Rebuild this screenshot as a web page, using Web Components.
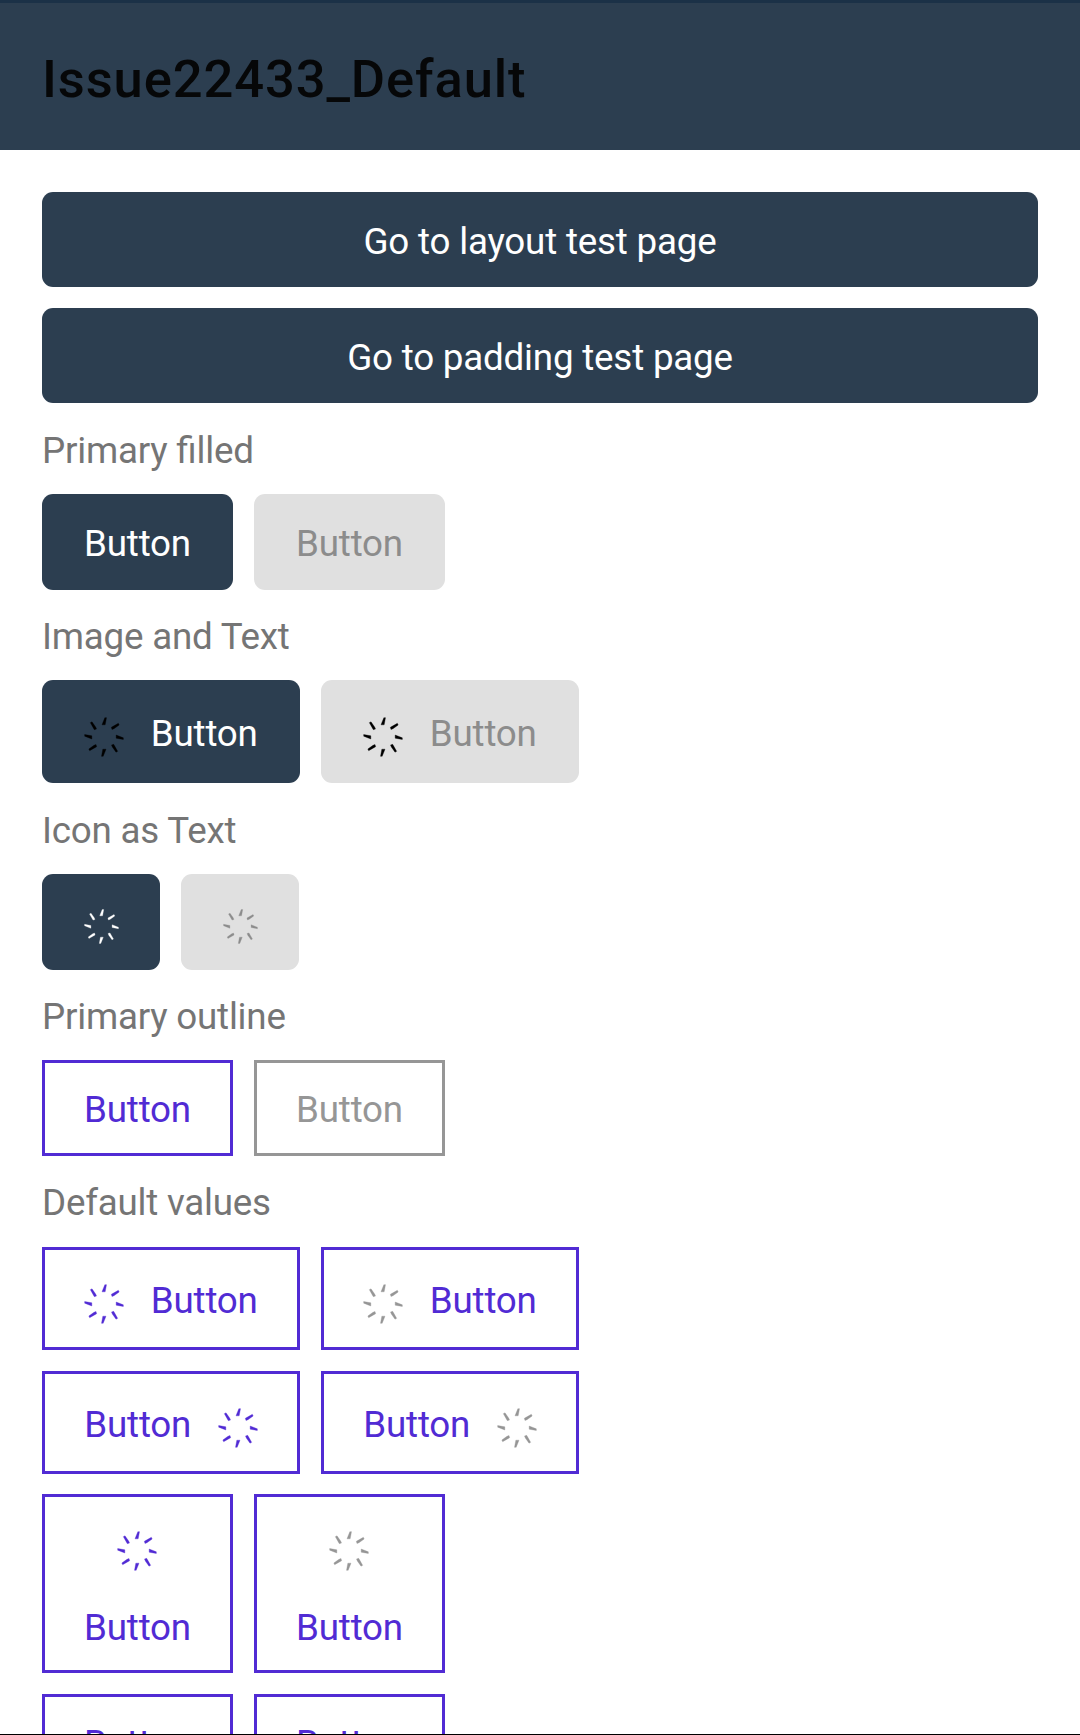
<!DOCTYPE html>
<html lang="en">
<head>
<meta charset="utf-8">
<title>Issue22433_Default</title>
<style>
html, body { margin: 0; padding: 0; background: #fff; }
body { height: 1735px; overflow: hidden; font-family: Roboto, "Liberation Sans", sans-serif; font-feature-settings: "liga" 1; }
</style>
</head>
<body>
<gallery-page></gallery-page>
<script>
class AppBar extends HTMLElement {
  constructor() {
    super();
    this.attachShadow({ mode: "open" }).innerHTML = `
      <style>
        :host { display: block; box-sizing: border-box; height: 150px; flex: none;
          background: #2c3e50; border-top: 3px solid #1b3147; padding: 45px 42px 0; }
        h1 { margin: 0; font-size: 52.5px; line-height: 62px; font-weight: 500; letter-spacing: .9px; color: #060708; white-space: nowrap; }
      </style>
      <h1><slot></slot></h1>`;
  }
}

class SpinnerIcon extends HTMLElement {
  constructor() {
    super();
    const rays = [0, 90, 180, 270].map(a => `<g transform="rotate(${a})">
      <path d="M2.5 -58H7.5L3.5 -36.5H-6Z"/>
      <path d="M43 -41L45.5 -36L30 -25L24 -22.5L22 -29Z"/></g>`).join("");
    this.attachShadow({ mode: "open" }).innerHTML = `
      <style>
        :host { display: block; flex: none; width: var(--icon-size, 40px); height: var(--icon-size, 40px); }
        svg { display: block; width: 100%; height: 100%; fill: currentColor; stroke: currentColor; stroke-width: 1; }
      </style>
      <svg viewBox="-60 -60 120 120">${rays}</svg>`;
  }
}

class UiButton extends HTMLElement {
  constructor() {
    super();
    this.attachShadow({ mode: "open" }).innerHTML = `
      <style>
        :host { display: flex; box-sizing: border-box; flex: none; width: 191px; height: 96px;
          justify-content: center; align-items: flex-start; padding-top: 28px;
          border-radius: 11px; background: #2c3e50; color: #fff;
          font-size: 36.75px; line-height: 43px; letter-spacing: -.2px; white-space: nowrap; }
        :host([wide]) { width: 100%; height: 95px; }
        :host([off]) { background: #e0e0e0; color: #8c8c8c; }
        :host([image]) { width: 258px; height: 103px; padding-top: 32px; gap: 26.5px; }
        :host([image]) ::slotted(spinner-icon) { margin-top: 4.8px; color: #000; }
        :host([glyph]) { width: 118px; padding-top: 34.5px; --icon-size: 35px; }
        :host([outline]) { padding-top: 25px; border: 3px solid #512bd4; border-radius: 0; background: #fff; color: #512bd4; }
        :host([outline][off]) { border-color: #969696; color: #969696; }
        :host([outline][image]) { padding-top: 29px; }
        :host([outline]) ::slotted(spinner-icon) { color: #512bd4; }
        :host([outline]) ::slotted(spinner-icon[dim]) { color: #969696; }
        :host([stack]) { flex-direction: column; align-items: center; justify-content: flex-start;
          height: 179px; padding-top: 33.6px; gap: 35.4px; }
        :host([stack]) ::slotted(spinner-icon) { margin-right: 1.4px; }
      </style>
      <slot></slot>`;
  }
}

class SectionLabel extends HTMLElement {
  constructor() {
    super();
    this.attachShadow({ mode: "open" }).innerHTML = `
      <style>
        :host { display: block; font-size: 36.75px; line-height: 43px; letter-spacing: -.22px; color: #757575; padding: 25px 0 22px; }
        :host([roomy]) { padding-top: 26px; }
        :host([last]) { padding-bottom: 23px; }
      </style>
      <slot></slot>`;
  }
}

class ButtonRow extends HTMLElement {
  constructor() {
    super();
    this.attachShadow({ mode: "open" }).innerHTML = `
      <style>
        :host { display: flex; gap: 21px; }
        :host([column]) { flex-direction: column; }
      </style>
      <slot></slot>`;
  }
}

class GalleryPage extends HTMLElement {
  constructor() {
    super();
    this.attachShadow({ mode: "open" }).innerHTML = `
      <style>
        :host { display: flex; flex-direction: column; box-sizing: border-box; height: 1735px;
          overflow: hidden; border-bottom: 1px solid #000; }
        main { flex: 1; min-height: 0; overflow: hidden; padding: 42px 42px 0; }
        .defaults { display: flex; flex-direction: column; gap: 21px; }
        .tight { margin-top: -1px; }
      </style>
      <app-bar>Issue22433_Default</app-bar>
      <main>
        <button-row column>
          <ui-button wide>Go to layout test page</ui-button>
          <ui-button wide>Go to padding test page</ui-button>
        </button-row>
        <section-label roomy>Primary filled</section-label>
        <button-row><ui-button>Button</ui-button><ui-button off>Button</ui-button></button-row>
        <section-label>Image and Text</section-label>
        <button-row>
          <ui-button image><spinner-icon></spinner-icon><span>Button</span></ui-button>
          <ui-button image off><spinner-icon></spinner-icon><span>Button</span></ui-button>
        </button-row>
        <section-label roomy>Icon as Text</section-label>
        <button-row>
          <ui-button glyph><spinner-icon></spinner-icon></ui-button>
          <ui-button glyph off><spinner-icon></spinner-icon></ui-button>
        </button-row>
        <section-label>Primary outline</section-label>
        <button-row><ui-button outline>Button</ui-button><ui-button outline off>Button</ui-button></button-row>
        <section-label last>Default values</section-label>
        <div class="defaults">
          <button-row>
            <ui-button outline image><spinner-icon></spinner-icon><span>Button</span></ui-button>
            <ui-button outline image><spinner-icon dim></spinner-icon><span>Button</span></ui-button>
          </button-row>
          <button-row>
            <ui-button outline image><span>Button</span><spinner-icon></spinner-icon></ui-button>
            <ui-button outline image><span>Button</span><spinner-icon dim></spinner-icon></ui-button>
          </button-row>
          <button-row class="tight">
            <ui-button outline stack><spinner-icon></spinner-icon><span>Button</span></ui-button>
            <ui-button outline stack><spinner-icon dim></spinner-icon><span>Button</span></ui-button>
          </button-row>
          <button-row>
            <ui-button outline>Button</ui-button>
            <ui-button outline>Button</ui-button>
          </button-row>
        </div>
      </main>`;
  }
}

customElements.define("app-bar", AppBar);
customElements.define("spinner-icon", SpinnerIcon);
customElements.define("ui-button", UiButton);
customElements.define("section-label", SectionLabel);
customElements.define("button-row", ButtonRow);
customElements.define("gallery-page", GalleryPage);
</script>
</body>
</html>
